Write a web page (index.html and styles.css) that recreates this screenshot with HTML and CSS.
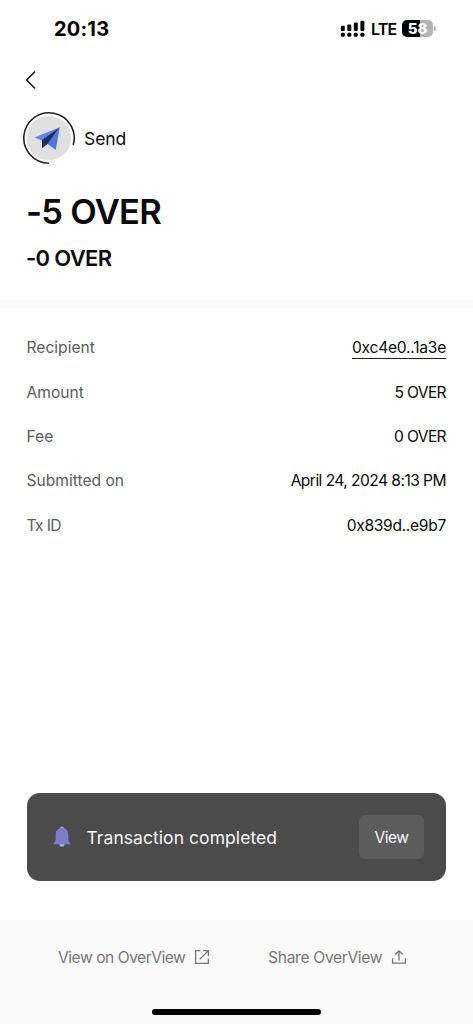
FILE: index.html
```html
<!DOCTYPE html>
<html lang="en">
<head>
<meta charset="utf-8">
<meta name="viewport" content="width=device-width, initial-scale=1">
<title>Transaction details</title>
<link rel="stylesheet" href="styles.css">
</head>
<body>
<div class="screen">
  <header class="status">
    <span class="clock">20:13</span>
    <div class="indicators">
      <svg class="signal" width="26" height="18" viewBox="0 0 26 18">
        <rect x="0.8" y="5.8" width="4" height="5.2" rx="1.2"/><rect x="7.3" y="4.4" width="4" height="6.6" rx="1.2"/><rect x="13.8" y="2.6" width="4" height="8.4" rx="1.2"/><rect x="20.4" y="0.8" width="4" height="10.2" rx="1.2"/>
        <rect x="0.8" y="12.8" width="4" height="4" rx="1.4"/><rect x="7.3" y="12.8" width="4" height="4" rx="1.4"/><rect x="13.8" y="12.8" width="4" height="4" rx="1.4"/><rect x="20.4" y="12.8" width="4" height="4" rx="1.4"/>
      </svg>
      <span class="network">LTE</span>
      <span class="battery">58</span>
      <span class="battery-cap"></span>
    </div>
  </header>

  <nav class="nav">
    <svg width="12" height="20" viewBox="0 0 12 20" fill="none" stroke="#111" stroke-width="1.5"><path d="M10 1.5 1.6 10 10 18.5"/></svg>
  </nav>

  <section class="kind">
    <svg width="54" height="54" viewBox="0 0 54 54">
      <circle cx="26.800" cy="27" r="22.3" fill="#e0e0e0"/>
      <path d="M27 52.200A25.2 25.2 0 1 1 51.200 34" fill="none" stroke="#222" stroke-width="1.6"/>
      <path d="M37.700 16.300 12.500 26.500 20 29.500Z" fill="#5c85f2"/>
      <path d="M37.700 16.300 25.500 33 33.800 38.700Z" fill="#4a77ee"/>
      <path d="M37.700 16.300 20 29V37.300l5.800-4.500Z" fill="#1f2f5c"/>
    </svg>
    <span class="kind-label">Send</span>
  </section>

  <section class="totals">
    <h1 class="amount">-5 OVER</h1>
    <p class="converted">-0 OVER</p>
  </section>

  <dl class="details">
    <div class="row"><dt>Recipient</dt><dd class="link">0xc4e0..1a3e</dd></div>
    <div class="row"><dt>Amount</dt><dd class="coin">5 OVER</dd></div>
    <div class="row"><dt>Fee</dt><dd class="coin">0 OVER</dd></div>
    <div class="row"><dt>Submitted on</dt><dd class="date">April 24, 2024 8:13 PM</dd></div>
    <div class="row"><dt class="tx">Tx ID</dt><dd class="hash">0x839d..e9b7</dd></div>
  </dl>

  <aside class="toast">
    <svg class="bell" width="20" height="22" viewBox="0 0 20 22">
      <circle cx="10" cy="2.300" r="1.900" fill="#a9a2dc"/>
      <circle cx="10" cy="18.200" r="2.500" fill="#b4aee2"/>
      <path d="M10 2C5.800 2 3.600 5 3.600 8.800V14L1.300 18.300H18.700L16.400 14V8.800C16.400 5 14.200 2 10 2Z" fill="#7e7bca"/>
    </svg>
    <span class="message">Transaction completed</span>
    <button class="view">View</button>
  </aside>

  <footer class="footer">
    <div class="actions">
      <a class="action open"><span>View on OverView</span>
        <svg width="16" height="16" viewBox="0 0 16 16" fill="none" stroke="#777" stroke-width="1.300"><path d="M6.300 1.600H1.600V14.400H14.400V9.800M9 1.600H14.400V7M14.400 1.600 5.800 10.200"/></svg></a>
      <a class="action share"><span>Share OverView</span>
        <svg width="16" height="16" viewBox="0 0 16 16" fill="none" stroke="#777" stroke-width="1.300"><path d="M1.600 9.300V14.200H14.400V9.300M8 11.500V2M4.300 5.500 8 1.800 11.700 5.500"/></svg></a>
    </div>
    <div class="home"></div>
  </footer>
</div>
</body>
</html>
```
FILE: styles.css
```css
* { box-sizing: border-box; }
body { margin: 0; background: #fff; color: #0b0b0b; font-family: Inter, "Liberation Sans", sans-serif; }
h1, p, dl, dd { margin: 0; }
svg { display: block; flex: none; }
.screen { width: 473px; height: 1024px; display: flex; flex-direction: column; overflow: hidden; white-space: nowrap; }

.status { height: 57px; padding: 0 37px 0 54px; display: flex; align-items: center; justify-content: space-between; }
.clock { font-size: 20px; font-weight: 750; letter-spacing: 0.2px; color: #000; }
.indicators { display: flex; align-items: center; }
.signal { fill: #000; }
.network { margin-left: 5px; width: 26px; font-size: 16px; font-weight: 600; letter-spacing: -0.8px; color: #000; }
.battery { margin-left: 5px; width: 31px; height: 17px; border-radius: 5px; background: linear-gradient(90deg, #000 58%, #b3b3b3 58%); color: #fff; font-size: 15px; font-weight: 800; line-height: 17px; text-align: center; }
.battery-cap { margin-left: 1px; width: 2px; height: 5px; border-radius: 0 2px 2px 0; background: #b3b3b3; }

.nav { height: 46px; padding: 13px 25px; }
.kind { margin-top: 8px; height: 54px; padding-left: 22px; display: flex; align-items: center; gap: 8px; }
.kind-label { font-size: 17.5px; letter-spacing: -0.05px; }

.totals { height: 143px; padding: 27px 26px 0; border-bottom: 8px solid #fafafa; }
.amount { font-size: 34.5px; font-weight: 600; line-height: 40px; letter-spacing: -0.75px; }
.converted { margin-top: 11px; font-size: 22px; font-weight: 600; line-height: 30px; letter-spacing: -0.65px; }

.details { padding: 18px 27px 0 26.5px; flex: 1; font-size: 15.6px; line-height: 44px; }
.row { height: 44.4px; display: flex; justify-content: space-between; align-items: center; }
.row dt { color: #5c5c5c; }
.row .tx { letter-spacing: -0.6px; }
.link { height: 22px; margin-bottom: 1px; line-height: 21px; border-bottom: 1.5px solid #222; letter-spacing: -0.25px; }
.coin { letter-spacing: -0.65px; }
.date { letter-spacing: -0.56px; }
.hash { letter-spacing: -0.3px; }

.toast { margin: 0 27px 39px; height: 88px; border-radius: 13px; background: #4b4b4b; padding: 0 22px 0 25px; display: flex; align-items: center; }
.bell { margin-bottom: 1px; }
.message { margin-left: 14.5px; flex: 1; color: #f7f7f7; font-size: 17.5px; letter-spacing: 0.06px; }
.view { width: 65px; height: 44px; padding: 0; border: 0; border-radius: 6px; background: #5c5c5c; color: #f7f7f7; font: 15.5px Inter, sans-serif; letter-spacing: -0.5px; }

.footer { height: 104px; background: #fafafa; display: flex; flex-direction: column; align-items: center; justify-content: space-between; padding: 25px 0 9px; }
.actions { width: 100%; padding-left: 58px; display: flex; }
.action { display: flex; align-items: center; height: 24px; gap: 8.5px; color: #777; font-size: 15.6px; }
.open { width: 210px; letter-spacing: -0.47px; }
.share { letter-spacing: -0.3px; }
.home { width: 169px; height: 6px; border-radius: 3px; background: #000; }
```
